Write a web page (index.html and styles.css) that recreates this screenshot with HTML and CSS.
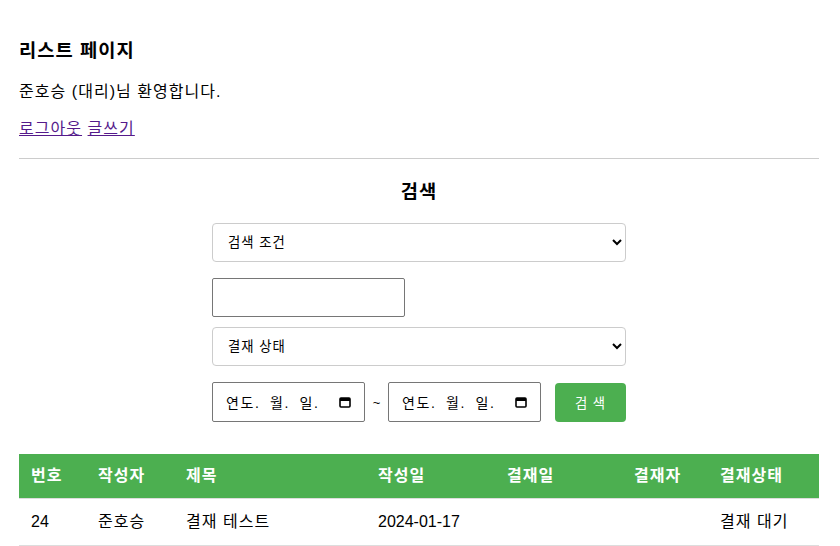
FILE: index.html
```html
<!DOCTYPE html>
<html lang="ko">
<head>
<meta charset="utf-8">
<title>리스트 페이지</title>
<link rel="stylesheet" href="styles.css">
</head>
<body>
<div class="page">
  <h3 class="title">리스트 페이지</h3>
  <p class="welcome">준호승 (대리)님 환영합니다.</p>
  <div class="links"><a href="#" class="link">로그아웃</a> <a href="#" class="link">글쓰기</a></div>
  <hr class="divider">
  <section class="search">
    <h3 class="search-title">검색</h3>
    <form class="search-form">
      <select class="select">
        <option>검색 조건</option>
      </select>
      <input type="text" class="text-input">
      <select class="select select-second">
        <option>결재 상태</option>
      </select>
      <div class="date-row">
        <div class="date-input"><span class="date-text">연도. 월. 일.</span><svg class="cal" width="12" height="12" viewBox="0 0 12 12"><rect x="1" y="2" width="10" height="9" rx="1" fill="none" stroke="#000" stroke-width="1.6"/><rect x="1" y="2" width="10" height="3" fill="#000"/></svg></div>
        <span class="tilde">~</span>
        <div class="date-input"><span class="date-text">연도. 월. 일.</span><svg class="cal" width="12" height="12" viewBox="0 0 12 12"><rect x="1" y="2" width="10" height="9" rx="1" fill="none" stroke="#000" stroke-width="1.6"/><rect x="1" y="2" width="10" height="3" fill="#000"/></svg></div>
        <button type="button" class="search-btn">검 색</button>
      </div>
    </form>
  </section>
  <table class="list">
    <colgroup>
      <col class="c1"><col class="c2"><col class="c3"><col class="c4"><col class="c5"><col class="c6"><col class="c7">
    </colgroup>
    <thead>
      <tr><th>번호</th><th>작성자</th><th>제목</th><th>작성일</th><th>결재일</th><th>결재자</th><th>결재상태</th></tr>
    </thead>
    <tbody>
      <tr><td class="num">24</td><td>준호승</td><td>결재 테스트</td><td class="num">2024-01-17</td><td></td><td></td><td>결재 대기</td></tr>
    </tbody>
  </table>
</div>
</body>
</html>
```
FILE: styles.css
```css
html, body {
  margin: 0;
  padding: 0;
  background: #fff;
}
body {
  font-family: "Liberation Sans", "Noto Sans CJK KR", sans-serif;
  color: #000;
  font-size: 16px;
  letter-spacing: 0.065em;
}
.page {
  width: 800px;
  padding: 20px 19px 0 19px;
}
.title {
  font-size: 18.72px;
  line-height: 25px;
  margin: 18px 0 18px 0;
  font-weight: bold;
}
.welcome {
  margin: 0;
  line-height: 21px;
}
.links {
  margin-top: 16px;
  line-height: 21px;
}
.link {
  color: #551a8b;
  text-decoration: underline;
}
.divider {
  border: 0;
  border-top: 1px solid #ccc;
  margin: 19px 0 0 0;
  height: 0;
}
.search-title {
  text-align: center;
  font-size: 18.72px;
  line-height: 25px;
  margin: 20px 0 19px 0;
}
.search-form {
  width: 414px;
  margin: 0 auto;
}
.select {
  display: block;
  width: 414px;
  height: 39px;
  padding: 0 8px 0 11px;
  border: 1px solid #ccc;
  border-radius: 4px;
  font-family: "Liberation Sans", "Noto Sans CJK KR", sans-serif;
  font-size: 13.33px;
  letter-spacing: 1px;
  background: #fff;
  color: #000;
  box-sizing: border-box;
  margin: 0;
}
.text-input {
  display: block;
  width: 193px;
  height: 39px;
  box-sizing: border-box;
  border: 1px solid #767676;
  border-radius: 2px;
  margin: 16px 0 0 0;
  padding: 0 8px;
}
.select-second {
  margin-top: 10px;
}
.date-row {
  display: flex;
  align-items: center;
  margin-top: 16px;
  height: 40px;
}
.date-input {
  width: 153px;
  height: 40px;
  box-sizing: border-box;
  border: 1px solid #767676;
  border-radius: 2px;
  display: flex;
  align-items: center;
  padding: 0 13px 0 13px;
  font-size: 14px;
  letter-spacing: 1.6px;
}
.date-text {
  flex: 1;
  word-spacing: 4px;
}
.cal {
  display: block;
}
.tilde {
  width: 23px;
  text-align: center;
  font-size: 13px;
  letter-spacing: 0;
}
.search-btn {
  margin-left: 14px;
  width: 71px;
  height: 39px;
  background: #4caf50;
  color: #fff;
  border: 0;
  border-radius: 4px;
  font-family: "Liberation Sans", "Noto Sans CJK KR", sans-serif;
  font-size: 13.33px;
  letter-spacing: 1px;
  padding: 0;
}
.list {
  width: 800px;
  border-collapse: collapse;
  table-layout: fixed;
  margin-top: 32px;
}
.c1 { width: 67px; }
.c2 { width: 88px; }
.c3 { width: 192px; }
.c4 { width: 129px; }
.c5 { width: 127px; }
.c6 { width: 86px; }
.c7 { width: 111px; }
.list th {
  background: #4caf50;
  color: #fff;
  font-weight: bold;
  text-align: left;
  padding: 12px;
  line-height: 20px;
  border-bottom: 1px solid #ddd;
}
.list td {
  text-align: left;
  padding: 12px;
  line-height: 22px;
  border-bottom: 1px solid #ddd;
}
.list td.num {
  letter-spacing: 0;
}
```
